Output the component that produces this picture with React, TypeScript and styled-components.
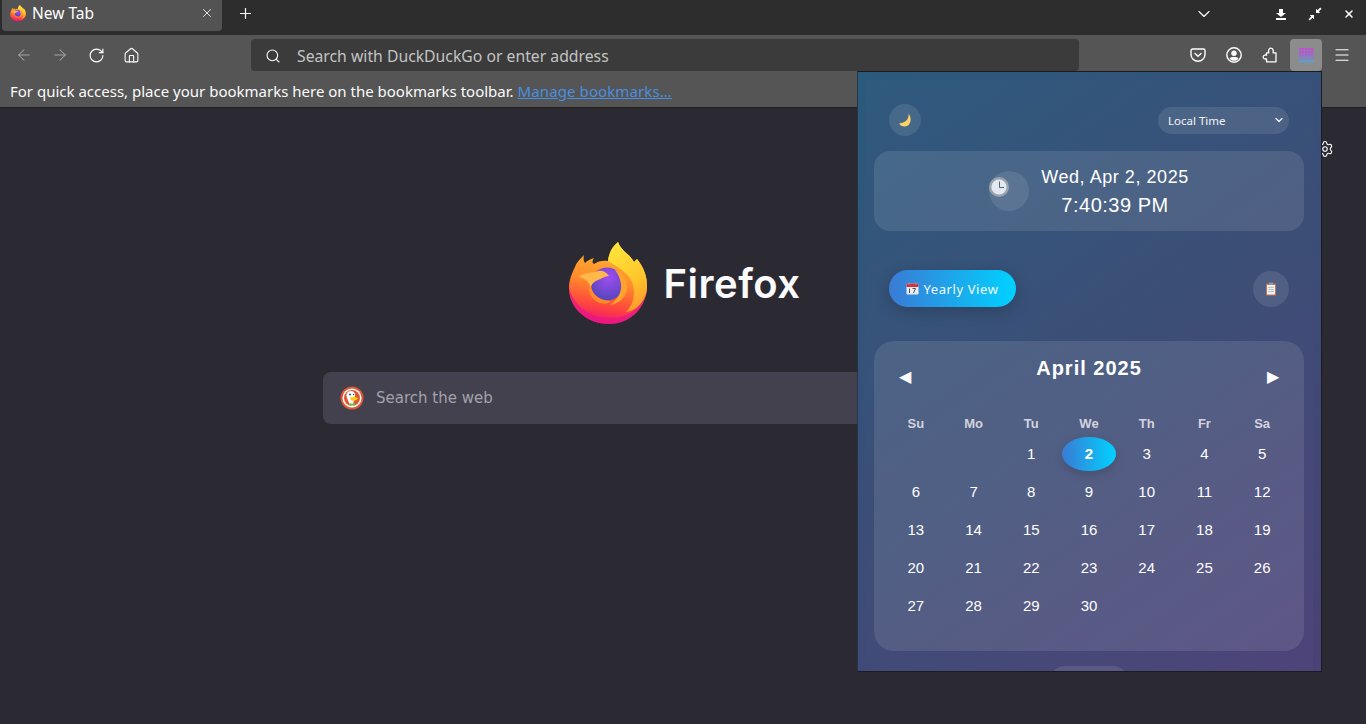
import React from "react";
import styled, {createGlobalStyle} from "styled-components";
import {ArrowLeft, ArrowRight, ChevronDown, House, Menu, Plus, RotateCw, Search, Settings, X} from "lucide-react";

const GlobalStyle = createGlobalStyle`
  html, body {
    margin: 0;
    padding: 0;
    height: 100%;
    overflow: hidden;
    background: #2b2a33;
  }
  * { box-sizing: border-box; }
`

const Window = styled.div`
  position: relative;
  width: 1366px;
  height: 724px;
  display: flex;
  flex-direction: column;
  overflow: hidden;
  font-family: "Noto Sans", sans-serif;
  color: #fff;
`

const TabBar = styled.div`
  height: 35px;
  background: #2d2d2d;
  display: flex;
  align-items: flex-start;
  padding-left: 2px;
`

const Tab = styled.div`
  width: 220px;
  height: 31px;
  background: #535353;
  border-radius: 0 0 4px 4px;
  display: flex;
  align-items: center;
  padding: 0 8px 5px 8px;
  gap: 6px;
  font-size: 15.5px;
`

const TabTitle = styled.span`
  flex: 1;
`

const NewTab = styled.div`
  width: 46px;
  height: 27px;
  display: flex;
  align-items: center;
  justify-content: center;
`

const Spacer = styled.div`
  flex: 1;
`

const WindowButton = styled.div<{ $width: number; $gap?: number }>`
  width: ${p => p.$width}px;
  height: 27px;
  margin-right: ${p => p.$gap ?? 0}px;
  display: flex;
  align-items: center;
  justify-content: center;
`

const NavBar = styled.div`
  height: 36px;
  background: #555555;
  display: flex;
  align-items: flex-start;
  padding: 4px 0 0 6px;
`

const NavButton = styled.div<{ $active?: boolean; $dim?: boolean; $width?: number }>`
  width: ${p => p.$width ?? 36}px;
  height: 32px;
  margin: ${p => p.$active ? "0 2px" : "0"};
  border-radius: 4px;
  display: flex;
  align-items: center;
  justify-content: center;
  color: ${p => p.$dim ? "#a3a3a3" : "#fff"};
  background: ${p => p.$active ? "#8c8c8c" : "transparent"};
`

const UrlBar = styled.div`
  width: 828px;
  height: 32px;
  margin: 0 101px 0 103px;
  background: #3b3b3b;
  border-radius: 4px;
  display: flex;
  align-items: center;
  gap: 16px;
  padding: 1px 0 0 14px;
  font-size: 15.75px;
  color: #c4c4c4;
`

const BookmarksBar = styled.div`
  height: 37px;
  background: #555555;
  border-bottom: 1px solid #1f1f1f;
  display: flex;
  align-items: center;
  padding: 4px 10px 0;
  gap: 4px;
  font-size: 15px;
  color: #fbfbfb;
`

const ManageLink = styled.a`
  color: #4a8fe0;
  text-decoration: underline;
  letter-spacing: 0.1px;
`

const NewTabPage = styled.main`
  flex: 1;
  background: #2b2a33;
  display: flex;
  flex-direction: column;
  align-items: center;
`

const GearRow = styled.div`
  align-self: stretch;
  height: 134px;
  padding: 32px 32px 0 0;
  display: flex;
  justify-content: flex-end;
  color: #fbfbfe;
`

const Brand = styled.div`
  display: flex;
  align-items: center;
  gap: 16px;
  height: 82px;
  margin-left: 2px;
`

const BrandName = styled.span`
  font-family: Inter, sans-serif;
  font-weight: 600;
  font-size: 40px;
  letter-spacing: 0.5px;
  color: #fbfbfe;
`

const WebSearch = styled.div`
  width: 720px;
  height: 52px;
  margin-top: 48px;
  background: #42414d;
  border-radius: 8px;
  display: flex;
  align-items: center;
  gap: 12px;
  padding-left: 17px;
  font-family: "DejaVu Sans", sans-serif;
  font-size: 15px;
  color: #a3a2ab;
`

const Popup = styled.aside`
  position: absolute;
  left: 857px;
  top: 71px;
  width: 465px;
  height: 601px;
  border: 1px solid #1c1b22;
  border-left-color: #26354a;
  overflow: hidden;
  padding: 8px 8px 0 7px;
  background: linear-gradient(145deg, #2a5a7c 0%, #3b4d78 50%, #4a4175 100%);
`

const PopupScroll = styled.div`
  height: 100%;
  padding: 24px 24px 0;
  background: linear-gradient(145deg, #2f5a7e 0%, #3c4e76 50%, #4e4479 100%);
  display: flex;
  flex-direction: column;
`

const PopupHead = styled.div`
  height: 32px;
  flex: none;
  display: flex;
  align-items: center;
  justify-content: space-between;
`

const RoundButton = styled.div<{ $size: number }>`
  width: ${p => p.$size}px;
  height: ${p => p.$size}px;
  border-radius: 50%;
  background: rgba(255, 255, 255, 0.1);
  display: flex;
  align-items: center;
  justify-content: center;
`

const ZoneSelect = styled.div`
  width: 131px;
  height: 27px;
  border-radius: 14px;
  background: rgba(255, 255, 255, 0.1);
  display: flex;
  align-items: center;
  justify-content: space-between;
  padding: 0 4px 0 10px;
  font-size: 11.5px;
  color: #f4f4f8;
`

const ClockCard = styled.section`
  height: 80px;
  flex: none;
  margin: 15px -15px 0;
  border-radius: 16px;
  background: rgba(255, 255, 255, 0.1);
  display: flex;
  align-items: center;
  justify-content: center;
  gap: 12px;
  font-family: "Liberation Sans", sans-serif;
`

const ClockFace = styled.div`
  width: 40px;
  height: 40px;
  border-radius: 50%;
  background: rgba(255, 255, 255, 0.1);
  padding-top: 6px;
`

const ClockText = styled.div`
  display: flex;
  flex-direction: column;
  align-items: center;
`

const DateLine = styled.div`
  font-size: 18px;
  line-height: 28px;
  letter-spacing: 0.55px;
`

const TimeLine = styled.div`
  font-size: 20px;
  line-height: 28px;
  letter-spacing: 0.5px;
`

const ActionRow = styled.div`
  margin-top: 39px;
  height: 37px;
  flex: none;
  display: flex;
  align-items: center;
  justify-content: space-between;
`

const YearlyButton = styled.div`
  width: 127px;
  height: 37px;
  border-radius: 19px;
  background: linear-gradient(90deg, #3a7bd5, #00d2ff);
  box-shadow: 0 4px 15px rgba(0, 0, 0, 0.2);
  display: flex;
  align-items: center;
  justify-content: center;
  gap: 4px;
  font-size: 13px;
  letter-spacing: 0.6px;
  color: #f4f8ff;
`

const CalendarCard = styled.section`
  margin: 34px -15px 0;
  height: 310px;
  flex: none;
  padding: 15px 15px 0;
  border-radius: 20px;
  background: rgba(255, 255, 255, 0.1);
  font-family: "Liberation Sans", sans-serif;
`

const MonthRow = styled.div`
  height: 42px;
  display: flex;
  align-items: flex-start;
  justify-content: space-between;
`

const MonthTitle = styled.h2`
  margin: 0;
  font-size: 20px;
  line-height: 24px;
  font-weight: 700;
  letter-spacing: 1px;
`

const MonthArrow = styled.div`
  width: 32px;
  height: 40px;
  display: flex;
  align-items: center;
  justify-content: center;
  font-size: 16px;
`

const DayGrid = styled.div`
  display: grid;
  grid-template-columns: repeat(7, 1fr);
  column-gap: 4px;
  row-gap: 4px;
  margin-top: 14px;
`

const WeekDay = styled.div`
  height: 21px;
  padding-top: 2px;
  display: flex;
  align-items: center;
  justify-content: center;
  font-size: 13px;
  font-weight: 700;
  color: #d3d3de;
`

const Day = styled.div<{ $today?: boolean }>`
  height: 34px;
  padding-bottom: ${p => p.$today ? 1 : 2}px;
  border-radius: 50%;
  display: flex;
  align-items: center;
  justify-content: center;
  font-size: 15px;
  font-weight: ${p => p.$today ? 700 : 400};
  background: ${p => p.$today ? "linear-gradient(90deg, #3a7bd5, #00d2ff)" : "transparent"};
  box-shadow: ${p => p.$today ? "0 4px 10px rgba(0, 0, 0, 0.15)" : "none"};
`

const TodayPill = styled.div`
  width: 82px;
  height: 36px;
  flex: none;
  margin: 15px auto 0;
  border-radius: 18px;
  background: rgba(255, 255, 255, 0.1);
`

const FoxLogo: React.FC<{ size: number }> = ({size}) => (
    <svg width={size} height={size * 82 / 80} viewBox="0 0 80 82">
        <defs>
            <linearGradient id="foxBody" x1="0.6" y1="0.1" x2="0.45" y2="1">
                <stop offset="0" stopColor="#ffb52e"/>
                <stop offset="0.45" stopColor="#ff8a2c"/>
                <stop offset="0.75" stopColor="#ff4a3c"/>
                <stop offset="1" stopColor="#f0146f"/>
            </linearGradient>
            <linearGradient id="foxFlame" x1="0.3" y1="0" x2="0.6" y2="1">
                <stop offset="0" stopColor="#ffe53a"/>
                <stop offset="0.6" stopColor="#ffc62c"/>
                <stop offset="1" stopColor="#ff9a2c"/>
            </linearGradient>
            <radialGradient id="foxGlobe" cx="0.55" cy="0.3" r="0.75">
                <stop offset="0" stopColor="#a04df0"/>
                <stop offset="1" stopColor="#4f46b8"/>
            </radialGradient>
        </defs>
        <path fill="url(#foxBody)"
              d="M50 0C53 9 62 12 66 20L69 17C76 26 79 34 79 44C79 65 62 82 41 82C19 82 1 66 1 46C1 38 4 31 7 25C8 21 12 17 16 13C15 17 16 20 17 21C19 19 22 17 26 16C24 19 24 21 26 22C30 19 35 18 40 19C41 10 45 4 50 0Z"/>
        <path fill="url(#foxFlame)"
              d="M50 0C53 9 62 12 66 20L69 17C76 26 79 34 79 44C79 58 70 68 58 70C66 62 68 50 64 40C60 30 48 24 40 19C41 10 45 4 50 0Z"/>
        <path fill="#e8178a" opacity="0.75"
              d="M1 46C1 66 19 82 41 82C60 82 74 70 78 52C72 68 58 76 42 76C22 76 6 64 1 46Z"/>
        <circle cx="39" cy="42" r="16.500" fill="url(#foxGlobe)"/>
        <path fill="#ffa22e" d="M47 28C55 30 60 38 59 47C58 56 50 62 42 63C49 58 54 51 53 42C52 36 50 32 47 28Z"/>
        <path fill="#ff8a2c"
              d="M23 40C22 50 29 58 42 59C44 60 38 63 32 61C24 58 19 50 21 42Z"/>
        <path fill="#ffb84a"
              d="M11 34C16 31 24 31 30 29C35 28 38 30 41 34C37 34 33 37 30 38C27 39 24 41 23 45C21 41 19 38 16 37C14 36 12 35 11 34Z"/>
    </svg>
)

const DuckIcon: React.FC = () => (
    <svg width="24" height="24" viewBox="0 0 24 24">
        <circle cx="12" cy="12" r="11.500" fill="#de5833"/>
        <circle cx="12" cy="12" r="9.500" fill="#fff"/>
        <circle cx="12" cy="12" r="8" fill="#de5833"/>
        <path fill="#fff" d="M6.500 8C8 4 14 4 15 8C15.500 11 13 13 13.500 19.500L10 19.800C9 15 6 12 6.500 8Z"/>
        <circle cx="10" cy="8.500" r="1" fill="#2d4f8e"/>
        <circle cx="13.500" cy="8.500" r="0.700" fill="#2d4f8e"/>
        <path fill="#fdd209" d="M10 11.500C12 10.500 16 10.800 18 12C17 14 15 14.800 13 14.800C11 14.800 10 13 10 11.500Z"/>
        <path fill="#65bc46" d="M9.500 17L12 17.800L15 16.800L15.500 19L13 19L10 20Z"/>
    </svg>
)

const PocketIcon: React.FC = () => (
    <svg width="16" height="16" viewBox="0 0 16 16" fill="none" stroke="#fff" strokeWidth="1.400">
        <path d="M2.500 2H13.500C14.300 2 15 2.700 15 3.500V7.500C15 11.200 11.900 14.300 8 14.300C4.100 14.300 1 11.200 1 7.500V3.500C1 2.700 1.700 2 2.500 2Z"/>
        <path d="M5 6.500L8 9.300L11 6.500" strokeLinecap="round"/>
    </svg>
)

const AccountIcon: React.FC = () => (
    <svg width="16" height="16" viewBox="0 0 16 16">
        <circle cx="8" cy="8" r="7.200" fill="none" stroke="#fff" strokeWidth="1.400"/>
        <circle cx="8" cy="6.300" r="2.700" fill="#fff"/>
        <path fill="#fff" d="M3.500 11.500C4.500 10.300 6 10 8 10C10 10 11.500 10.300 12.500 11.500C11.500 13 10 13.800 8 13.800C6 13.800 4.500 13 3.500 11.500Z"/>
    </svg>
)

const ExtensionsIcon: React.FC = () => (
    <svg width="16" height="16" viewBox="0 0 16 16" fill="none" stroke="#fff" strokeWidth="1.300" strokeLinejoin="round">
        <path d="M4.500 14.800H14V5.800H11C11.700 4.300 11.300 1.200 8.800 1.200C6.600 1.200 6.300 4 6.800 5.800H4.500V8.200C3 7.600 1.200 8.300 1.200 10C1.200 11.700 3 12.400 4.500 11.800Z"/>
    </svg>
)

const ExtensionIcon: React.FC = () => {
    const rows = ["#c04fd6", "#b455d8", "#9a68d8", "#7f82d6", "#5f9fd0"]
    return <svg width="16" height="16" viewBox="0 0 16 16">
        {rows.map((color, row) => [1, 4, 7, 10, 13].map(x => (
            <rect key={`${row}-${x}`} x={x} y={row * 3 + 1} width="2.500" height="2.500" fill={color}/>
        )))}
    </svg>
}

const MoonIcon: React.FC = () => (
    <svg width="16" height="16" viewBox="0 0 16 16">
        <path fill="#ffd166" d="M11.500 1.500C12.300 6 9.500 11 2 11.500C3.500 14 7 15.200 10 14C14 12.300 15 6 11.500 1.500Z"/>
    </svg>
)

const ClockEmoji: React.FC = () => (
    <svg width="20" height="20" viewBox="0 0 20 20">
        <circle cx="10" cy="10" r="10" fill="#9aa3ad"/>
        <circle cx="10" cy="10" r="7.600" fill="#e3e9f1"/>
        <path d="M10.500 4.500V10.500H15" fill="none" stroke="#59646f" strokeWidth="1"/>
    </svg>
)

const CalendarEmoji: React.FC = () => (
    <svg width="13" height="13" viewBox="0 0 13 13">
        <rect x="0.500" y="1.500" width="12" height="11" rx="1" fill="#e8edf2"/>
        <path d="M0.500 2.500C0.500 2 1 1.500 1.500 1.500H11.500C12 1.500 12.500 2 12.500 2.500V5H0.500Z" fill="#d5303e"/>
        <path d="M3 0.500V3M10 0.500V3" stroke="#8d98a3" strokeWidth="1"/>
        <path d="M3.500 6.500V11M6.500 6.500H9.500L7.500 11" fill="none" stroke="#4a5560" strokeWidth="1"/>
    </svg>
)

const ClipboardEmoji: React.FC = () => (
    <svg width="14" height="14" viewBox="0 0 14 14">
        <rect x="2" y="1.500" width="10" height="12" rx="0.800" fill="#c9754f"/>
        <rect x="3" y="3" width="8" height="9.500" fill="#eef0f4"/>
        <path d="M4.500 5.500H9.500M4.500 7.500H9.500M4.500 9.500H9.500" stroke="#a5adb6" strokeWidth="0.800"/>
        <rect x="5" y="0.500" width="4" height="2.500" rx="0.500" fill="#8d98a3"/>
    </svg>
)

const MinimizeIcon: React.FC = () => (
    <svg width="12" height="12" viewBox="0 0 12 12" fill="#fff">
        <path d="M4 1H8V5H11L6 9L1 5H4Z"/>
        <rect x="1" y="10" width="10" height="2"/>
    </svg>
)

const RestoreIcon: React.FC = () => (
    <svg width="14" height="14" viewBox="0 0 14 14" fill="#fff">
        <path d="M13.500 1.800L12.200 0.500L9.500 3.200L8 1.700V6H12.300L10.800 4.500Z"/>
        <path d="M0.500 12.200L1.800 13.500L4.500 10.800L6 12.300V8H1.700L3.200 9.500Z"/>
    </svg>
)

const WEEK = ["Su", "Mo", "Tu", "We", "Th", "Fr", "Sa"]
const BLANKS = [0, 1]
const DAYS = Array.from({length: 30}, (_, i) => i + 1)

const App: React.FC = () => {
    return <Window>
        <GlobalStyle/>
        <TabBar>
            <Tab>
                <FoxLogo size={16}/>
                <TabTitle>New Tab</TabTitle>
                <X size={14} strokeWidth={1.4}/>
            </Tab>
            <NewTab><Plus size={17} strokeWidth={1.7}/></NewTab>
            <Spacer/>
            <WindowButton $width={20} $gap={50}><ChevronDown size={20} strokeWidth={1.3}/></WindowButton>
            <WindowButton $width={34}><MinimizeIcon/></WindowButton>
            <WindowButton $width={34}><RestoreIcon/></WindowButton>
            <WindowButton $width={34}><X size={12} strokeWidth={3}/></WindowButton>
        </TabBar>
        <NavBar>
            <NavButton $dim><ArrowLeft size={18} strokeWidth={1.4}/></NavButton>
            <NavButton $dim><ArrowRight size={18} strokeWidth={1.4}/></NavButton>
            <NavButton><RotateCw size={17} strokeWidth={1.6}/></NavButton>
            <NavButton $width={34}><House size={17} strokeWidth={1.5}/></NavButton>
            <UrlBar>
                <Search size={16} strokeWidth={1.6} color="#fff"/>
                <span>Search with DuckDuckGo or enter address</span>
            </UrlBar>
            <NavButton><PocketIcon/></NavButton>
            <NavButton><AccountIcon/></NavButton>
            <NavButton><ExtensionsIcon/></NavButton>
            <NavButton $active $width={32}><ExtensionIcon/></NavButton>
            <NavButton><Menu size={18} strokeWidth={1.5}/></NavButton>
        </NavBar>
        <BookmarksBar>
            <span>For quick access, place your bookmarks here on the bookmarks toolbar.</span>
            <ManageLink>Manage bookmarks…</ManageLink>
        </BookmarksBar>
        <NewTabPage>
            <GearRow><Settings size={18} strokeWidth={1.5}/></GearRow>
            <Brand>
                <FoxLogo size={80}/>
                <BrandName>Firefox</BrandName>
            </Brand>
            <WebSearch>
                <DuckIcon/>
                <span>Search the web</span>
            </WebSearch>
        </NewTabPage>
        <Popup>
            <PopupScroll>
                <PopupHead>
                    <RoundButton $size={32}><MoonIcon/></RoundButton>
                    <ZoneSelect>
                        <span>Local Time</span>
                        <ChevronDown size={12} strokeWidth={2.4}/>
                    </ZoneSelect>
                </PopupHead>
                <ClockCard>
                    <ClockFace><ClockEmoji/></ClockFace>
                    <ClockText>
                        <DateLine>Wed, Apr 2, 2025</DateLine>
                        <TimeLine>7:40:39 PM</TimeLine>
                    </ClockText>
                </ClockCard>
                <ActionRow>
                    <YearlyButton><CalendarEmoji/>Yearly View</YearlyButton>
                    <RoundButton $size={36}><ClipboardEmoji/></RoundButton>
                </ActionRow>
                <CalendarCard>
                    <MonthRow>
                        <MonthArrow>◀</MonthArrow>
                        <MonthTitle>April 2025</MonthTitle>
                        <MonthArrow>▶</MonthArrow>
                    </MonthRow>
                    <DayGrid>
                        {WEEK.map(name => <WeekDay key={name}>{name}</WeekDay>)}
                        {BLANKS.map(n => <Day key={`blank-${n}`}/>)}
                        {DAYS.map(n => <Day key={n} $today={n === 2}>{n}</Day>)}
                    </DayGrid>
                </CalendarCard>
                <TodayPill/>
            </PopupScroll>
        </Popup>
    </Window>
}

export default App;
